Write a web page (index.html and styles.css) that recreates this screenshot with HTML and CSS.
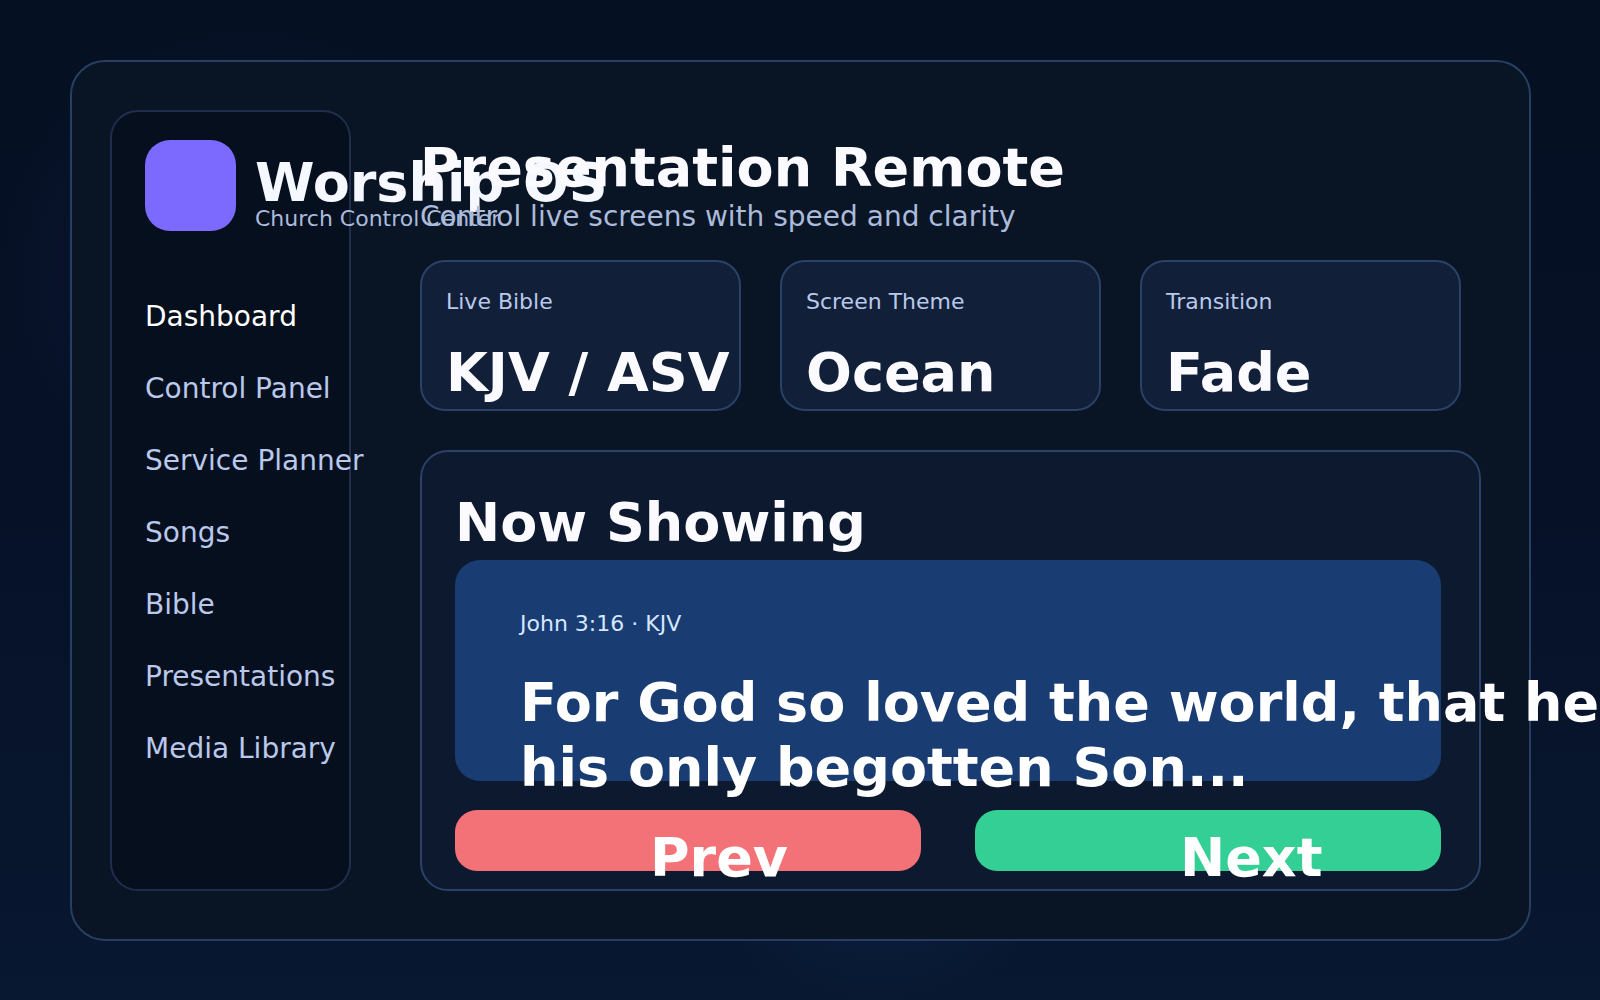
FILE: index.html
```html
<!DOCTYPE html>
<html lang="en">
<head>
<meta charset="utf-8">
<meta name="viewport" content="width=device-width, initial-scale=1">
<title>Worship OS – Presentation Remote</title>
<link rel="stylesheet" href="styles.css">
</head>
<body>
<div class="app">
  <aside class="sidebar">
    <div class="brand">
      <div class="logo"></div>
      <div class="brand-text">
        <div class="display">Worship OS</div>
        <div class="label">Church Control Center</div>
      </div>
    </div>
    <nav class="nav">
      <a class="active" href="#">Dashboard</a>
      <a href="#">Control Panel</a>
      <a href="#">Service Planner</a>
      <a href="#">Songs</a>
      <a href="#">Bible</a>
      <a href="#">Presentations</a>
      <a href="#">Media Library</a>
    </nav>
  </aside>
  <main class="main">
    <header class="header">
      <h1 class="display">Presentation Remote</h1>
      <p class="subtitle">Control live screens with speed and clarity</p>
    </header>
    <section class="cards">
      <div class="card"><div class="label">Live Bible</div><div class="display">KJV / ASV</div></div>
      <div class="card"><div class="label">Screen Theme</div><div class="display">Ocean</div></div>
      <div class="card"><div class="label">Transition</div><div class="display">Fade</div></div>
    </section>
    <section class="panel">
      <h2 class="display">Now Showing</h2>
      <div class="screen">
        <div class="label">John 3:16 · KJV</div>
        <p class="verse">For God so loved the world, that he<br>his only begotten Son...</p>
      </div>
      <div class="actions">
        <button class="btn prev" type="button">Prev</button>
        <button class="btn next" type="button">Next</button>
      </div>
    </section>
  </main>
</div>
</body>
</html>
```
FILE: styles.css
```css
* {
  box-sizing: border-box;
}

html {
  overflow-x: hidden;
}

body {
  margin: 0;
  min-height: 100vh;
  padding: 60px 69px 59px 70px;
  display: flex;
  overflow-x: hidden;
  font-family: "DejaVu Sans", sans-serif;
  color: #fafaff;
  background:
    radial-gradient(circle at 250px 260px, rgba(124, 70, 220, 0.1), rgba(124, 70, 220, 0) 250px),
    radial-gradient(circle at 880px 800px, rgba(56, 120, 255, 0.12), rgba(56, 120, 255, 0) 210px),
    linear-gradient(#051022, #061128 50%, #081830);
}

h1, h2, p {
  margin: 0;
}

.app {
  flex: 1;
  min-width: 0;
  display: flex;
  gap: 69px;
  padding: 48px 48px 48px 38px;
  border: 2px solid #283f64;
  border-radius: 35px;
  background: #091424;
}

.display {
  font-size: 54px;
  line-height: 56px;
  font-weight: 700;
  white-space: nowrap;
}

.label {
  font-size: 22px;
  line-height: 20px;
  white-space: nowrap;
  color: #b9c9eb;
}

.sidebar {
  flex: 0 0 241px;
  min-width: 0;
  padding: 28px 33px;
  border: 2px solid #1f2e4c;
  border-radius: 28px;
  background: #060f1e;
}

.brand {
  display: flex;
  gap: 19px;
  margin-bottom: 70px;
}

.brand .display {
  line-height: 52px;
  color: #f5f8ff;
}

.brand .label {
  color: #aabbdc;
}

.logo {
  flex: 0 0 91px;
  height: 91px;
  border-radius: 25px;
  background: #7c6aff;
}

.brand-text {
  padding-top: 17px;
}

.nav {
  display: flex;
  flex-direction: column;
  gap: 40px;
}

.nav a {
  font-size: 28px;
  line-height: 32px;
  white-space: nowrap;
  text-decoration: none;
  color: #b9c8eb;
}

.nav a.active {
  color: #ffffff;
}

.main {
  flex: 1;
  min-width: 0;
  display: flex;
  flex-direction: column;
  padding-top: 30px;
}

.header {
  margin-bottom: 27px;
}

.subtitle {
  margin-top: 5px;
  font-size: 28px;
  line-height: 32px;
  color: #aabbdc;
}

.cards {
  display: grid;
  grid-template-columns: repeat(3, 1fr);
  gap: 39px;
  margin: 0 20px 39px 0;
}

.card {
  min-width: 0;
  padding: 30px 24px 8px;
  border: 2px solid #2a4168;
  border-radius: 25px;
  background: #121f38;
}

.card .display {
  margin-top: 33px;
}

.panel {
  flex: 1;
  padding: 43px 38px 18px 33px;
  border: 2px solid #2a4168;
  border-radius: 28px;
  background: #0d192e;
}

.screen {
  height: 221px;
  margin-top: 9px;
  padding: 54px 65px 0;
  border-radius: 25px;
  background: #193c73;
}

.screen .label {
  color: #d7e6ff;
}

.verse {
  margin-top: 36px;
  font-size: 54px;
  line-height: 65px;
  font-weight: 700;
  white-space: nowrap;
  color: #ffffff;
}

.actions {
  display: grid;
  grid-template-columns: repeat(2, minmax(0, 1fr));
  gap: 54px;
  margin-top: 29px;
}

.btn {
  display: flex;
  align-items: flex-start;
  height: 61px;
  padding: 20px 0 0;
  border: 0;
  border-radius: 22px;
  font-family: inherit;
  font-size: 54px;
  line-height: 56px;
  font-weight: 700;
  color: #ffffff;
}

.prev {
  padding-left: 195px;
  background: #f27277;
}

.next {
  padding-left: 205px;
  background: #34cf95;
}
```
